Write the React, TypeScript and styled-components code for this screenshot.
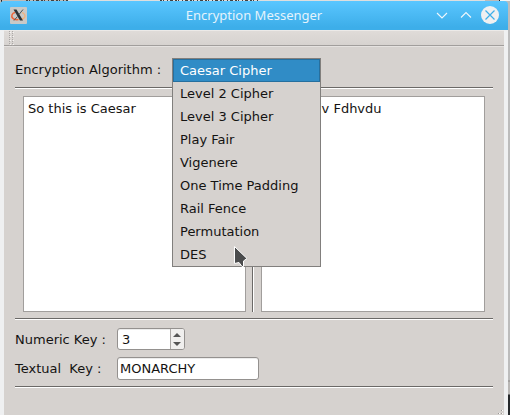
import React from "react";
import styled, { createGlobalStyle } from "styled-components";

const GlobalStyle = createGlobalStyle`
  * { box-sizing: border-box; }
  html, body { margin: 0; padding: 0; overflow: hidden; }
  body { font: 13px/16px "DejaVu Sans", sans-serif; color: #141312; }
`;

const Desktop = styled.div`
  position: relative;
  width: 510px;
  height: 415px;
  padding-top: 1px;
  overflow: hidden;
  background: linear-gradient(to bottom, #bcbcbc 0 380px, #8f8c8a 381px, #b9b7b5 382px 394px, #25282b 395px);
`;

const Backdrop = styled.svg`
  position: absolute;
  top: 0;
  left: 0;
  width: 510px;
  height: 6px;
`;

const Window = styled.div`
  position: relative;
  width: 508px;
  height: 414px;
  display: flex;
  flex-direction: column;
`;

const TitleBar = styled.header`
  height: 29px;
  flex: none;
  display: grid;
  grid-template-columns: 88px 1fr 88px;
  align-items: center;
  background: linear-gradient(#5ac6ff, #3daee9 90%);
  border-radius: 4px 4px 0 0;
`;

const AppIcon = styled.svg`
  width: 17px;
  height: 17px;
  margin-left: 9.5px;
`;

const Title = styled.h1`
  margin: 0;
  padding-bottom: 2px;
  text-align: center;
  font: 13px/18px "Noto Sans", sans-serif;
  color: #e4f3fc;
`;

const WindowButtons = styled.svg`
  width: 88px;
  height: 29px;
`;

const Frame = styled.div`
  flex: 1;
  display: flex;
  flex-direction: column;
  border: solid #eff0f1;
  border-width: 0 4px;
  background: #d6d2cf;
`;

const ToolBar = styled.div`
  height: 17px;
  flex: none;
  border-top: 1px solid #eceae8;
  border-bottom: 1px solid #e5e2e0;
  background: linear-gradient(#dfdbd8, #d6d2cf);
  box-shadow: inset 0 -1px #a19e9c;
`;

const Grip = styled.svg`
  display: block;
  width: 8px;
  height: 15px;
  margin-left: 4px;
`;

const Content = styled.main`
  width: 489px;
  padding-left: 11px;
  flex: 1;
  display: flex;
  flex-direction: column;
`;

const AlgorithmRow = styled.div`
  height: 40px;
  padding-top: 15px;
`;

const Rule = styled.hr`
  width: 478px;
  height: 2px;
  flex: none;
  margin: 0;
  border: 0;
  background: #fff;
  border-top: 1px solid #6b6967;
`;

const Editors = styled.div`
  display: flex;
  height: 229px;
  padding: 7px 8px 6px;
`;

const TextArea = styled.div<{ $width: number }>`
  width: ${(p) => p.$width}px;
  height: 216px;
  padding: 4px;
  border: 1px solid #a19e9c;
  background: #fff;
  white-space: pre;
`;

const Divider = styled.div`
  width: 2px;
  margin: 0 7px 0 6px;
  background: #fff;
  border-left: 1px solid #6b6967;
`;

const Keys = styled.div`
  display: grid;
  grid-template-columns: 102px 1fr;
  grid-template-rows: 22px 23px;
  row-gap: 7px;
  height: 66px;
  padding-top: 8px;
`;

const Label = styled.label`
  line-height: 24px;
  white-space: pre;
`;

const Field = styled.div<{ $width: number; $indent: number }>`
  display: flex;
  width: ${(p) => p.$width}px;
  height: 100%;
  padding-left: ${(p) => p.$indent}px;
  line-height: 21px;
  border: 1px solid #94918f;
  border-radius: 3px;
  background: #fff;
  box-shadow: inset 0 1px #ececec;
`;

const Stepper = styled.svg`
  width: 14px;
  height: 20px;
  margin-left: auto;
  border-radius: 0 2px 2px 0;
`;

const Menu = styled.ul`
  position: absolute;
  left: 172px;
  top: 57px;
  width: 149px;
  height: 209px;
  margin: 0;
  padding: 0;
  list-style: none;
  border: 1px solid #817f7d;
  background: #d6d2cf;
`;

const MenuItem = styled.li<{ $selected: boolean }>`
  height: 23px;
  padding-left: 7px;
  line-height: 23px;
  color: ${(p) => (p.$selected ? "#fff" : "#141312")};
  background: ${(p) => (p.$selected ? "#308cc6" : "transparent")};
  box-shadow: ${(p) => (p.$selected ? "inset 0 0 0 1px #266f9e" : "none")};
`;

const Cursor = styled.svg`
  position: absolute;
  left: 233px;
  top: 244px;
  width: 15px;
  height: 25px;
`;

const SizeGrip = styled.svg`
  position: absolute;
  left: 497px;
  top: 408px;
  width: 7px;
  height: 6px;
`;

const ALGORITHMS = [
  "Caesar Cipher", "Level 2 Cipher", "Level 3 Cipher", "Play Fair", "Vigenere",
  "One Time Padding", "Rail Fence", "Permutation", "DES",
];

export default function App() {
  return (
    <Desktop>
      <GlobalStyle />
      <Backdrop viewBox="0 0 510 6" shapeRendering="crispEdges">
        <path d="M2 0h66v6H2zM485 0h15v6h-15z" fill="#bdbbb9" />
        <path d="M68 0h417v6H68z" fill="#dedede" />
        <path d="M500 0h10v1h-10z" fill="#f4f4f4" />
        <path d="M1 0h1v2H1zM499 0h1v1h-1z" fill="#222" />
        <path
          d="M26 .5h42M160 .5h98"
          stroke="#44413f"
          strokeDasharray="2 1 1 3 1 2 3 2"
        />
      </Backdrop>
      <Window>
        <TitleBar>
          <AppIcon viewBox="0 0 17 17">
            <rect width="17" height="17" rx="1" fill="#c8c9c7" />
            <path d="M5 5.5C2 6 1 9 2.5 11c1 1.5 3 2 6 1.6" fill="none" stroke="#ef6437" strokeWidth="1.5" />
            <path d="M12 5.5c4 1.500 4 5.500 0 6.500l-3.500 .6" fill="none" stroke="#f1b27d" strokeWidth="1.3" />
            <path d="M3.500 2.500h3l6.500 11h-3z" fill="#2c3235" />
            <path d="M13 2.500 9 7.500M7.500 9.500 4 13.500" stroke="#4b5356" />
          </AppIcon>
          <Title>Encryption Messenger</Title>
          <WindowButtons viewBox="0 0 88 29" fill="none">
            <path d="M17 12l5 5 5-5M41 16.500l5-5 5 5" stroke="#eff7fc" strokeWidth="1.1" />
            <circle cx="70" cy="14" r="9" fill="#eff0f1" />
            <path d="M65.500 9.500l9 9M74.500 9.500l-9 9" stroke="#3daee9" strokeWidth="1.2" />
          </WindowButtons>
        </TitleBar>
        <Frame>
          <ToolBar>
            <Grip viewBox="0 0 8 15" shapeRendering="crispEdges">
              {[0, 4, 8, 12].map((y) => (
                <React.Fragment key={y}>
                  <path d={`M1 ${y}h1v1H1zM4 ${y}h1v1H4zM1 ${y + 2}h1v1H1zM4 ${y + 2}h1v1H4z`} fill="#aaa7a5" />
                  <path d={`M2 ${y + 1}h1v1H2zM5 ${y + 1}h1v1H5z`} fill="#f4f2f1" />
                </React.Fragment>
              ))}
            </Grip>
          </ToolBar>
          <Content>
            <AlgorithmRow>Encryption Algorithm :</AlgorithmRow>
            <Rule />
            <Editors>
              <TextArea $width={223}>So this is Caesar</TextArea>
              <Divider />
              <TextArea $width={224}>Vr wklv lv Fdhvdu</TextArea>
            </Editors>
            <Rule />
            <Keys>
              <Label>Numeric Key :</Label>
              <Field $width={68} $indent={4}>
                3
                <Stepper viewBox="0 0 14 20">
                  <rect width="14" height="20" fill="#f0efee" />
                  <path d="M.5 0v20" stroke="#aaa7a5" />
                  <path d="M3 8h8L7 4zM3 13h8l-4 4z" fill="#555" />
                </Stepper>
              </Field>
              <Label>Textual  Key :</Label>
              <Field $width={142} $indent={2}>MONARCHY</Field>
            </Keys>
            <Rule />
          </Content>
        </Frame>
        <Menu>
          {ALGORITHMS.map((name, i) => (
            <MenuItem key={name} $selected={i === 0}>{name}</MenuItem>
          ))}
        </Menu>
        <SizeGrip viewBox="0 0 7 6" shapeRendering="crispEdges">
          <path d="M5 1h1v1H5zM2 4h1v1H2zM5 4h1v1H5z" fill="#fff" />
          <path d="M4 1h1v1H4zM1 4h1v1H1zM4 4h1v1H4z" fill="#9b9895" />
        </SizeGrip>
        <Cursor viewBox="0 0 15 25">
          <path d="M1.500 1.500v17l4.500-1 3 4h1.500v-5.500l3.500-2.500z" fill="#4b4c4d" stroke="#fff" />
        </Cursor>
      </Window>
    </Desktop>
  );
}
